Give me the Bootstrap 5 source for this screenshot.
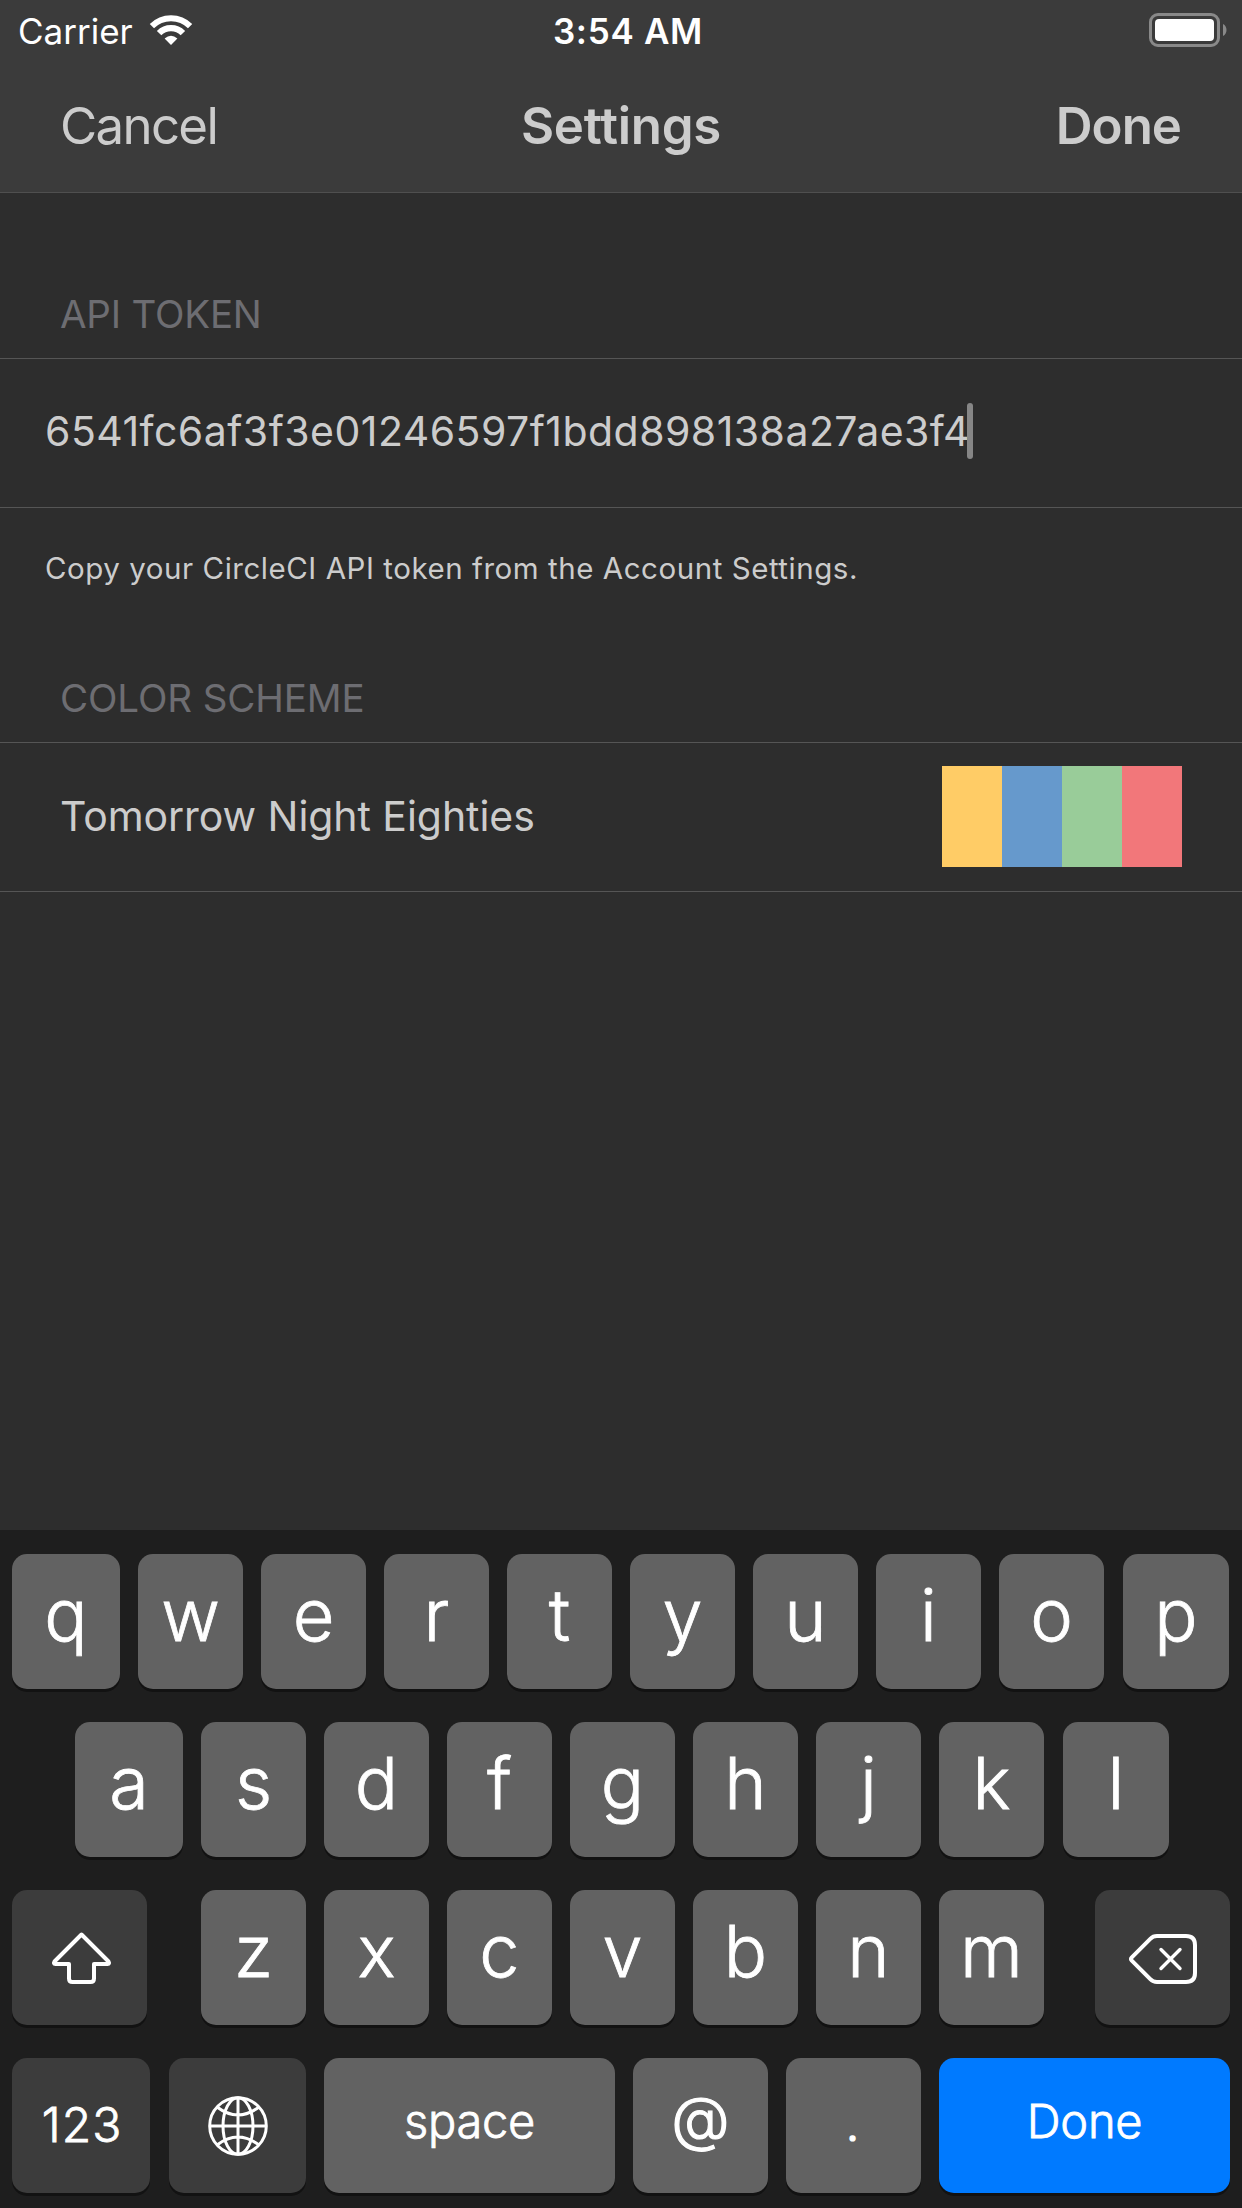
<!DOCTYPE html>
<html lang="en">
<head>
<meta charset="utf-8">
<meta name="viewport" content="width=device-width, initial-scale=1">
<title>Settings</title>
<link rel="stylesheet" href="https://cdn.jsdelivr.net/npm/bootstrap@5.3.0/dist/css/bootstrap.min.css">
<style>
  body { font-family: Inter, "Liberation Sans", sans-serif; background: #2d2d2d; color: #ccc; }
  svg { display: block; flex: none; }
  .screen { width: 1242px; height: 2208px; }
  .top-bar { background: #3b3b3b; border-bottom: 1px solid #4f4f4f; height: 193px; }
  .status-bar { height: 62px; padding: 0 14px 0 18px; font-size: 35px; line-height: 62px; color: #fff; }
  .status-time { font-weight: 600; letter-spacing: .7px; padding-left: 10px; }
  .wifi { margin: 0 0 2px 16px; }
  .title-bar { padding: 0 61px 0 60px; font-size: 51px; line-height: 128px; }
  .title-bar .btn { --bs-btn-padding-x: 0; --bs-btn-padding-y: 0; --bs-btn-border-width: 0; font-size: inherit; line-height: inherit; color: #ccc; display: block; }
  .btn-cancel { letter-spacing: -1.7px; }
  .btn-finish { font-weight: 600; letter-spacing: -1px; }
  .bar-title { font-size: 51px; font-weight: 600; line-height: 128px; letter-spacing: -.25px; padding-left: 1px; }
  .group-title { font-size: 38.5px; line-height: 50px; font-weight: 400; color: #6d6d72; padding: 0 60px 19px; letter-spacing: -.1px; }
  .group-first { margin-top: 96px; letter-spacing: -.2px; }
  .group-next { margin-top: 45px; }
  .cell { height: 150px; border-top: 1px solid #555; border-bottom: 1px solid #555; font-size: 41px; line-height: 60px; }
  .cell-token { padding: 0 45px 4px; letter-spacing: .46px; }
  .caret { width: 6px; height: 56px; border-radius: 3px; background: #868686; margin: 0 0 0 -3px; }
  .cell-scheme { padding: 0 60px 1px; letter-spacing: -.06px; }
  .scheme-name { padding-bottom: 1px; }
  .swatches { height: 101px; }
  .swatch { width: 60px; }
  .yellow { background: #fc6; } .blue { background: #69c; } .green { background: #9c9; } .red { background: #f2777a; }
  .hint { font-size: 29.5px; line-height: 120px; padding-left: 45px; letter-spacing: .54px; }
  .keyboard { background: #1e1e1e; height: 678px; padding: 24px 12px 0; gap: 33px; color: #fff; }
  .keys { gap: 18px; }
  .keys-mid { padding-left: 63px; }
  .key { width: 105px; height: 135px; border-radius: 15px; background: #626262; box-shadow: 0 3px 0 #121212; font-size: 72px; font-weight: 300; -webkit-text-stroke: .8px #fff; line-height: 1.25; padding: 0 0 13px; border: 0; color: inherit; flex: none; display: flex; align-items: center; justify-content: center; }
  .key-first { width: 108px; }
  .key-last { width: 106px; margin-left: 1px; }
  .key-fn { background: #3c3c3c; padding: 0; }
  .key-shift { width: 135px; margin-right: 36px; padding-left: 3px; }
  .key-delete { width: 135px; margin-left: 33px; padding-bottom: 0; }
  .key-123 { width: 138px; font-size: 48px; letter-spacing: 1px; padding: 0 0 1px 2px; }
  .key-globe { width: 137px; margin: 0 0 0 1px; }
  .key-space { width: 291px; font-size: 47px; letter-spacing: -.3px; padding: 0 0 8px; }
  .key-sym { width: 135px; font-size: 60px; padding: 0 0 15px; -webkit-text-stroke-width: 1.2px; }
  .key-dot { font-size: 48px; padding: 0 2px 4px 0; }
  .key-done { width: 291px; font-size: 47px; background: #007aff; letter-spacing: -.3px; padding: 0 0 8px; }
</style>
<script src="https://cdn.jsdelivr.net/npm/bootstrap@5.3.0/dist/js/bootstrap.bundle.min.js"></script>
</head>
<body>
<div class="screen d-flex flex-column overflow-hidden">
  <header class="top-bar">
    <div class="status-bar d-flex align-items-center">
      <div class="d-flex align-items-center flex-fill w-25">
        <span>Carrier</span>
        <svg class="wifi" width="44" height="32" viewBox="0 0 44 32" fill="none" stroke="#fff">
          <path d="M2.9 12.1A27 27 0 0 1 41.1 12.1" stroke-width="6"/>
          <path d="M10.1 19.1A16.8 16.8 0 0 1 33.9 19.1" stroke-width="6.3"/>
          <path d="M22 31L15.6 24.5Q22 18.800 28.400 24.500Z" fill="#fff" stroke="none"/>
        </svg>
      </div>
      <div class="status-time">3:54 AM</div>
      <div class="d-flex align-items-center justify-content-end flex-fill w-25">
        <svg width="80" height="36" viewBox="0 0 80 36">
          <rect x="2.500" y="1.500" width="68" height="31" rx="7.500" fill="none" stroke="#898989" stroke-width="3"/>
          <rect x="7" y="6" width="59" height="22" rx="4" fill="#fff"/>
          <path d="M75 11C79.700 13 79.700 21 75 23Z" fill="#898989"/>
        </svg>
      </div>
    </div>
    <nav class="title-bar d-flex align-items-center">
      <div class="flex-fill w-25"><button class="btn btn-cancel">Cancel</button></div>
      <h1 class="bar-title m-0">Settings</h1>
      <div class="flex-fill w-25 d-flex justify-content-end"><button class="btn btn-finish">Done</button></div>
    </nav>
  </header>

  <main>
    <h2 class="group-title group-first mb-0">API TOKEN</h2>
    <div class="cell cell-token d-flex align-items-center"><span>6541fc6af3f3e01246597f1bdd898138a27ae3f4</span><span class="caret"></span></div>
    <p class="hint m-0">Copy your CircleCI API token from the Account Settings.</p>
    <h2 class="group-title group-next mb-0">COLOR SCHEME</h2>
    <div class="cell cell-scheme d-flex align-items-center justify-content-between">
      <span class="scheme-name">Tomorrow Night Eighties</span>
      <div class="swatches d-flex"><div class="swatch yellow"></div><div class="swatch blue"></div><div class="swatch green"></div><div class="swatch red"></div></div>
    </div>
  </main>

  <section class="keyboard d-flex flex-column mt-auto">
    <div class="keys d-flex">
      <button class="key key-first">q</button><button class="key">w</button><button class="key">e</button><button class="key">r</button><button class="key">t</button><button class="key">y</button><button class="key">u</button><button class="key">i</button><button class="key">o</button><button class="key key-last">p</button>
    </div>
    <div class="keys keys-mid d-flex">
      <button class="key key-first">a</button><button class="key">s</button><button class="key">d</button><button class="key">f</button><button class="key">g</button><button class="key">h</button><button class="key">j</button><button class="key">k</button><button class="key key-last">l</button>
    </div>
    <div class="keys d-flex">
      <button class="key key-fn key-shift" aria-label="Shift">
        <svg width="63" height="57" viewBox="50 1930 63 57" fill="none" stroke="#fff" stroke-width="4" stroke-linejoin="round">
          <path d="M81.500 1935.500L54.500 1962.500Q53 1965 55.500 1965H69V1979.500Q69 1983 72.500 1983H90.500Q94 1983 94 1979.500V1965H107.500Q110 1965 108.500 1962.500Z"/>
        </svg>
      </button>
      <button class="key">z</button><button class="key">x</button><button class="key">c</button><button class="key">v</button><button class="key">b</button><button class="key">n</button><button class="key">m</button>
      <button class="key key-fn key-delete" aria-label="Delete">
        <svg width="71" height="55" viewBox="1127 1930 71 55" fill="none" stroke="#fff" stroke-width="4" stroke-linejoin="round" stroke-linecap="round">
          <path d="M1131.800 1957.300L1150.300 1938.800Q1153 1936 1157 1936H1186Q1195 1936 1195 1945V1973Q1195 1982 1186 1982H1157Q1153 1982 1150.300 1979.200L1131.800 1960.700Q1130.200 1959 1131.800 1957.300Z"/>
          <path d="M1161 1949.500L1180 1968.500M1180 1949.500L1161 1968.500" stroke-width="3.400"/>
        </svg>
      </button>
    </div>
    <div class="keys d-flex">
      <button class="key key-fn key-123">123</button>
      <button class="key key-fn key-globe" aria-label="Next keyboard">
        <svg width="60" height="60" viewBox="0 0 60 60" fill="none" stroke="#fff" stroke-width="3">
          <circle cx="30" cy="30" r="28.300"/>
          <ellipse cx="30" cy="30" rx="15" ry="28.300"/>
          <path d="M30 1V59M1 30H59M9 11Q30 27 51 11M9 49Q30 33 51 49"/>
        </svg>
      </button>
      <button class="key key-space">space</button>
      <button class="key key-sym">@</button>
      <button class="key key-sym key-dot">.</button>
      <button class="key key-done">Done</button>
    </div>
  </section>
</div>
</body>
</html>
